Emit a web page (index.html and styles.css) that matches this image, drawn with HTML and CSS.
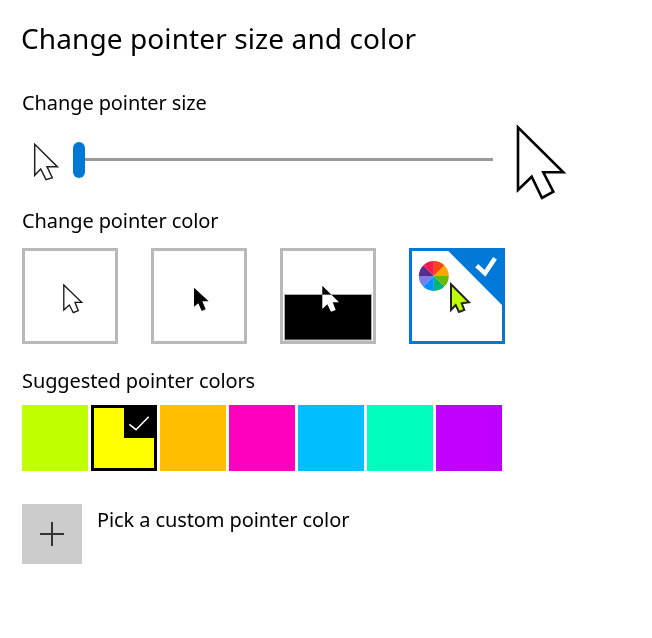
FILE: index.html
```html
<!DOCTYPE html>
<html lang="en">
<head>
    <meta charset="UTF-8">
    <title>Change pointer size and color</title>
    <link rel="stylesheet" href="styles.css">
</head>
<body>
    <h1>Change pointer size and color</h1>

    <h2 class="size-label">Change pointer size</h2>
    <div class="size-row">
        <svg class="cursor-small" width="26" height="38" viewBox="33 143 26 38">
            <path d="M34.7 144.3 57.3 166.7H47L52.3 177.7 46 179.7 40.7 169 34.7 175.3Z" fill="#fff" stroke="#222" stroke-width="1.5"/>
        </svg>
        <div class="thumb"></div>
        <div class="track"></div>
        <svg class="cursor-large" width="52" height="78" viewBox="515 123 52 78">
            <path d="M518 127.3 563.3 172.3H543.3L553.3 191.7 542 198 531.7 176.7 518 190Z" fill="#fff" stroke="#000" stroke-width="2.6"/>
        </svg>
    </div>

    <h2 class="color-label">Change pointer color</h2>
    <div class="tiles">
        <div class="tile">
            <svg width="90" height="90" viewBox="25 251 90 90">
                <path d="M63.8 285 81.7 302.3H75L78.3 310.7 73.3 312.7 69.3 305 63.8 310Z" fill="#fff" stroke="#111" stroke-width="1.3"/>
            </svg>
        </div>
        <div class="tile">
            <svg width="90" height="90" viewBox="154 251 90 90">
                <path d="M194 287.7 208.7 301.3H202.3L205.7 309.3 201.7 311 198.3 303.3 194 306.7Z" fill="#000"/>
            </svg>
        </div>
        <div class="tile">
            <svg width="90" height="90" viewBox="283 251 90 90">
                <rect x="284.5" y="294.5" width="87" height="45.5" fill="#000" stroke="#aaa"/>
                <path d="M322.3 285.7 339 302.3H332.7L335.7 310 331 311.7 327.3 304.3 322.3 309Z" fill="#fff" class="invert"/>
            </svg>
        </div>
        <div class="tile tile-selected">
            <svg width="90" height="90" viewBox="412 251 90 90">
                <path d="M448.3 251H502V305Z" fill="#0078d7"/>
                <path d="M476.7 265.7 485 273.3 495 258.3" fill="none" stroke="#fff" stroke-width="4.5"/>
                <path d="M433.8 276V261A15 15 0 0 1 444.4 265.4Z" fill="#f7460f"/>
                <path d="M433.8 276 444.4 265.4A15 15 0 0 1 448.8 276Z" fill="#ffa500"/>
                <path d="M433.8 276H448.8A15 15 0 0 1 444.4 286.6Z" fill="#6bb700"/>
                <path d="M433.8 276 444.4 286.6A15 15 0 0 1 433.8 291Z" fill="#00b577"/>
                <path d="M433.8 276V291A15 15 0 0 1 423.2 286.6Z" fill="#0091f8"/>
                <path d="M433.8 276 423.2 286.6A15 15 0 0 1 418.8 276Z" fill="#7a7fe8"/>
                <path d="M433.8 276H418.8A15 15 0 0 1 423.2 265.4Z" fill="#5c2d91"/>
                <path d="M433.8 276 423.2 265.4A15 15 0 0 1 433.8 261Z" fill="#f7184f"/>
                <path d="M451 284.3 469 302.3 461.7 303.3 464.3 310 459 312 455.7 305 451 310Z" fill="#bfff00" stroke="#222" stroke-width="2"/>
            </svg>
        </div>
    </div>

    <h2 class="suggest-label">Suggested pointer colors</h2>
    <div class="swatches">
        <div class="swatch lime"></div>
        <div class="swatch yellow swatch-selected">
            <div class="swatch-corner">
                <svg width="33" height="33" viewBox="124 405 33 33">
                    <path d="M129.3 424.3 136 429.7 148.7 416.7" fill="none" stroke="#fff" stroke-width="1.6"/>
                </svg>
            </div>
        </div>
        <div class="swatch amber"></div>
        <div class="swatch magenta"></div>
        <div class="swatch sky"></div>
        <div class="swatch mint"></div>
        <div class="swatch violet"></div>
    </div>

    <div class="custom-row">
        <div class="plus">
            <svg width="24" height="24" viewBox="0 0 24 24">
                <path d="M0 12H24M12 0V24" stroke="#333" stroke-width="2"/>
            </svg>
        </div>
        <span class="custom-text">Pick a custom pointer color</span>
    </div>
</body>
</html>
```

FILE: styles.css
```css
* {
    box-sizing: border-box;
    margin: 0;
    padding: 0;
}

body {
    font-family: "Noto Sans", "Open Sans", sans-serif;
    color: #000;
    background: #fff;
    padding: 19px 0 0 22px;
}

svg {
    display: block;
}

h1 {
    font-size: 28px;
    font-weight: 400;
    line-height: 38px;
    letter-spacing: 0.1px;
    margin-left: -1px;
}

h2 {
    font-size: 20px;
    font-weight: 400;
    line-height: 26px;
    letter-spacing: -0.1px;
}

.size-label {
    margin-top: 33px;
}

.size-row {
    display: flex;
    align-items: center;
    height: 74px;
    margin-top: 7px;
}

.cursor-small {
    margin-left: 11px;
    margin-top: 4px;
}

.thumb {
    width: 12px;
    height: 36px;
    margin-left: 14px;
    background: #0078d7;
    border-radius: 6px;
}

.track {
    width: 408px;
    height: 3px;
    margin-bottom: 2px;
    background: #999;
}

.cursor-large {
    margin-left: 22px;
    margin-top: 4px;
}

.color-label {
    margin-top: 11px;
}

.tiles {
    display: flex;
    gap: 33px;
    margin-top: 14px;
}

.tile {
    width: 96px;
    height: 96px;
    border: 3px solid #b9b9b9;
}

.tile-selected {
    border-color: #0078d7;
}

.invert {
    mix-blend-mode: difference;
}

.suggest-label {
    margin-top: 24px;
}

.swatches {
    display: flex;
    gap: 3px;
    margin-top: 11px;
}

.swatch {
    position: relative;
    width: 66px;
    height: 66px;
}

.swatch-selected {
    border: 3px solid #000;
}

.swatch-corner {
    position: absolute;
    top: -3px;
    right: -3px;
    background: #000;
}

.lime { background: #bfff00; }
.yellow { background: #ffff00; }
.amber { background: #ffbf00; }
.magenta { background: #ff00bf; }
.sky { background: #00bfff; }
.mint { background: #00ffbf; }
.violet { background: #bf00ff; }

.custom-row {
    display: flex;
    align-items: flex-start;
    gap: 15px;
    margin-top: 33px;
}

.plus {
    display: flex;
    align-items: center;
    justify-content: center;
    width: 60px;
    height: 60px;
    background: #ccc;
}

.custom-text {
    font-size: 20px;
    line-height: 26px;
    letter-spacing: -0.1px;
    margin-top: 3px;
}
```
